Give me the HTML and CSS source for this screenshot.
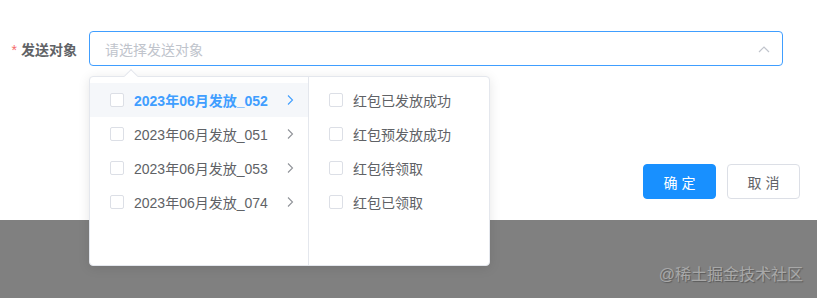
FILE: index.html
```html
<!DOCTYPE html>
<html lang="zh-CN">
<head>
    <meta charset="UTF-8">
    <title>发送对象</title>
    <link rel="stylesheet" href="styles.css">
</head>
<body>
    <div class="panel">
        <div class="form-row">
            <label class="form-label"><span class="req">*</span>发送对象</label>
            <div class="select">
                <span class="placeholder">请选择发送对象</span>
                <svg class="caret" width="12" height="8" viewBox="0 0 12 8"><path d="M1 7 L6 2 L11 7" fill="none" stroke="#c0c4cc" stroke-width="1.2"/></svg>
            </div>
        </div>
        <div class="footer">
            <button class="btn btn-primary">确 定</button>
            <button class="btn">取 消</button>
        </div>
    </div>
    <div class="mask">
        <span class="watermark">@稀土掘金技术社区</span>
    </div>

    <div class="cascader">
        <span class="pointer"></span>
        <ul class="menu menu-left">
            <li class="item active"><span class="box"></span><span class="label">2023年06月发放_052</span><svg class="next" width="8" height="12" viewBox="0 0 8 12"><path d="M2 1.5 L6.5 6 L2 10.5" fill="none" stroke="currentColor" stroke-width="1.1"/></svg></li>
            <li class="item"><span class="box"></span><span class="label">2023年06月发放_051</span><svg class="next" width="8" height="12" viewBox="0 0 8 12"><path d="M2 1.5 L6.5 6 L2 10.5" fill="none" stroke="currentColor" stroke-width="1.1"/></svg></li>
            <li class="item"><span class="box"></span><span class="label">2023年06月发放_053</span><svg class="next" width="8" height="12" viewBox="0 0 8 12"><path d="M2 1.5 L6.5 6 L2 10.5" fill="none" stroke="currentColor" stroke-width="1.1"/></svg></li>
            <li class="item"><span class="box"></span><span class="label">2023年06月发放_074</span><svg class="next" width="8" height="12" viewBox="0 0 8 12"><path d="M2 1.5 L6.5 6 L2 10.5" fill="none" stroke="currentColor" stroke-width="1.1"/></svg></li>
        </ul>
        <ul class="menu menu-right">
            <li class="item"><span class="box"></span><span class="label">红包已发放成功</span></li>
            <li class="item"><span class="box"></span><span class="label">红包预发放成功</span></li>
            <li class="item"><span class="box"></span><span class="label">红包待领取</span></li>
            <li class="item"><span class="box"></span><span class="label">红包已领取</span></li>
        </ul>
    </div>
</body>
</html>
```

FILE: styles.css
```css
* { box-sizing: border-box; }
body { margin: 0; font-family: "Liberation Sans", "Noto Sans CJK SC", sans-serif; font-size: 14px; color: #606266; background: #808080; height: 298px; overflow: hidden; }

.panel { background: #fff; height: 220px; padding-top: 31px; }
.form-row { display: flex; align-items: center; }
.form-label { width: 89px; padding-right: 12px; text-align: right; font-weight: 600; color: #606266; }
.req { color: #f56c6c; margin-right: 4px; font-weight: normal; }
.select { width: 694px; height: 35px; border: 1px solid #409eff; border-radius: 4px; display: flex; align-items: center; justify-content: space-between; padding: 0 12px 0 15px; }
.placeholder { color: #c0c4cc; }

.footer { display: flex; justify-content: flex-end; gap: 11px; padding: 98px 17px 0 0; }
.btn { width: 73px; height: 35px; border: 1px solid #dcdfe6; border-radius: 4px; background: #fff; color: #606266; font-family: inherit; font-size: 14px; }
.btn-primary { background: #1890ff; border-color: #1890ff; color: #fff; }

.mask { height: 78px; display: flex; justify-content: flex-end; align-items: center; padding: 0 14px 0 0; }
.watermark { color: #a8a8a8; font-size: 16px; text-shadow: 1px 1px 1px #5a5a5a; margin-top: 28px; }

.cascader { position: absolute; left: 89px; top: 76px; width: 401px; height: 190px; background: #fff; border: 1px solid #e4e7ed; border-radius: 4px; box-shadow: 0 2px 12px rgba(0,0,0,.1); display: flex; }
.pointer { position: absolute; top: -6px; left: 36px; width: 10px; height: 10px; background: #fff; border-left: 1px solid #e4e7ed; border-top: 1px solid #e4e7ed; transform: rotate(45deg); }
.menu { list-style: none; margin: 0; padding: 6px 0; height: 100%; }
.menu-left { width: 219px; border-right: 1px solid #e4e7ed; }
.menu-right { flex: 1; }
.item { position: relative; height: 34px; display: flex; align-items: center; padding: 0 20px; }
.item.active { background: #f5f7fa; color: #409eff; font-weight: 600; }
.box { width: 14px; height: 14px; border: 1px solid #dcdfe6; border-radius: 2px; background: #fff; margin-right: 10px; flex-shrink: 0; }
.next { position: absolute; right: 14px; top: 11px; color: #909399; }
.item.active .next { color: #409eff; }
```
